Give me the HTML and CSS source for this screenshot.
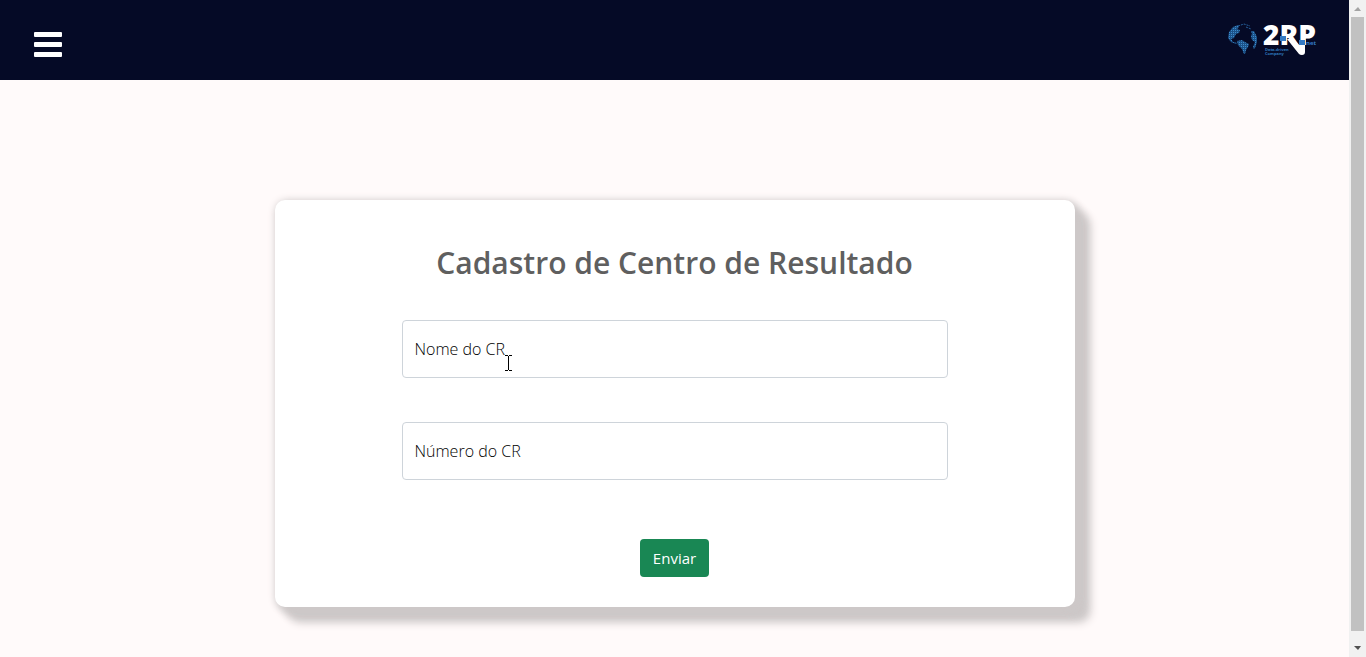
FILE: index.html
```html
<!DOCTYPE html>
<html lang="pt-BR">
<head>
<meta charset="utf-8">
<meta name="viewport" content="width=device-width, initial-scale=1">
<title>Cadastro de Centro de Resultado</title>
<link rel="stylesheet" href="styles.css">
</head>
<body>
<div class="page">
  <header class="topbar">
    <button class="menu" type="button" aria-label="Menu"><span class="menu-line"></span><span class="menu-line"></span><span class="menu-line"></span></button>
    <a class="brand" href="#" aria-label="2RP net">
      <svg width="92" height="36" viewBox="0 0 92 36">
        <defs>
          <pattern id="dots" width="2" height="2" patternUnits="userSpaceOnUse"><rect width="2" height="2" fill="#1c5289"/><rect width="1" height="1" fill="#3c8acb"/></pattern>
        </defs>
        <path fill="none" stroke="#25609c" stroke-dasharray="2 1" d="M13 4l6-2 6 2M21 5l5 2"/>
        <path fill="url(#dots)" d="M3 16l1-6 4-5 5-2 1 2-2 2 3 1-1 3-3 1-2 4-3 1 2 3 4 1-1 1-5-2z"/>
        <path fill="url(#dots)" d="M12 19l5-1 3 2 4 2-1 3-2 3-1 4h-1l-2-5-4-4z"/>
        <path fill="url(#dots)" d="M26 9l3 0 3 6v5l-2 6-1 1-1-2 2-5-3-2-1-4 1-2z"/>
        <text class="logo-name" x="38" y="23">2RP</text>
        <path fill="#050a26" d="M81 17h11v7H81z"/>
        <path fill="#fff" d="M62 17h7l5 6h6v7q0 3-3 3-2 0-3-1z"/>
        <path fill="#347bc4" d="M55 14h6v5h-6zM74 18h6v5h-6z"/>
        <text class="logo-net" x="81" y="23">net</text>
        <text class="logo-tag" x="40" y="29">Data-driven</text>
        <text class="logo-tag" x="40" y="33">Company</text>
      </svg>
    </a>
  </header>
  <main class="content">
    <form class="card">
      <h1 class="title">Cadastro de Centro de Resultado</h1>
      <div class="field">
        <input class="input" id="nome" type="text" placeholder=" ">
        <label class="label" for="nome">Nome do CR</label>
        <svg class="cursor" width="7" height="16" viewBox="0 0 7 16" aria-hidden="true"><path d="M0 .5h3M4 .5h3M3.500 1v14M0 15.500h3M4 15.500h3" fill="none" stroke="#000"/></svg>
      </div>
      <div class="field">
        <input class="input" id="numero" type="text" placeholder=" ">
        <label class="label" for="numero">Número do CR</label>
      </div>
      <button class="submit" type="button">Enviar</button>
    </form>
  </main>
</div>
<div class="scrollbar" aria-hidden="true">
  <svg class="arrow" width="17" height="17" viewBox="0 0 17 17"><path d="M5 11l4-4 3 4z" fill="#a3a3a3"/></svg>
  <div class="thumb"></div>
  <svg class="arrow arrow-down" width="17" height="17" viewBox="0 0 17 17"><path d="M5 6h7l-3 4z" fill="#505050"/></svg>
</div>
</body>
</html>
```

FILE: styles.css
```css
* {
  box-sizing: border-box;
}

body {
  margin: 0;
  display: flex;
  height: 100vh;
  overflow: hidden;
  background: #fffafa;
  color: #212529;
  font: 16px/24px "Open Sans", "Noto Sans", sans-serif;
}

.page {
  flex: 1;
  min-width: 0;
}

.topbar {
  display: flex;
  justify-content: space-between;
  align-items: center;
  height: 80px;
  padding: 0 32px 0 34px;
  background: #050a26;
}

.menu {
  display: flex;
  flex-direction: column;
  gap: 5px;
  margin-top: 9px;
  padding: 0;
  border: 0;
  background: none;
}

.menu-line {
  width: 28px;
  height: 5px;
  border-radius: 1px;
  background: #fff;
}

.brand,
.brand svg {
  display: block;
}

.brand svg {
  overflow: visible;
}

.logo-name {
  font: 800 28px "Open Sans", sans-serif;
  fill: #fff;
}

.logo-net {
  font: 700 6px "Open Sans", sans-serif;
  fill: #347bc4;
}

.logo-tag {
  font: 700 4px "Open Sans", sans-serif;
  fill: #2f78bb;
}

.content {
  padding: 120px 24px 48px;
}

.card {
  display: flex;
  flex-direction: column;
  align-items: center;
  max-width: 800px;
  margin: 0 auto;
  padding: 44px 24px 30px;
  border-radius: 10px;
  background: #fff;
  box-shadow: 1px 1px 8px #cdc8c8, 5px 5px 10px #cdc8c8, 10px 10px 10px #cdc8c8, 15px 15px 10px #cdc8c8;
}

.title {
  margin: 0 0 38px;
  color: #5f5f5f;
  font-size: 30px;
  font-weight: 600;
  line-height: 38px;
}

.field {
  position: relative;
  width: 100%;
  max-width: 546px;
  margin-bottom: 44px;
}

.input {
  display: block;
  width: 100%;
  height: 58px;
  padding: 16px 12px;
  border: 1px solid #ced4da;
  border-radius: 4px;
  background: #fff;
  font: inherit;
}

.label {
  position: absolute;
  top: 17px;
  left: 13px;
  color: #000;
  font-weight: 350;
}

.cursor {
  position: absolute;
  top: 35px;
  left: 103px;
}

.submit {
  height: 38px;
  margin-top: 15px;
  padding: 0 13px;
  border: 0;
  border-radius: 4px;
  background: #198754;
  color: #fff;
  font: inherit;
  font-size: 15px;
}

.scrollbar {
  display: flex;
  flex-direction: column;
  width: 17px;
  background: #f1f1f1;
}

.arrow {
  display: block;
}

.thumb {
  flex: 1;
  margin: 0 2px;
  background: #c1c1c1;
}

.arrow-down {
  margin-top: 9px;
}
```
